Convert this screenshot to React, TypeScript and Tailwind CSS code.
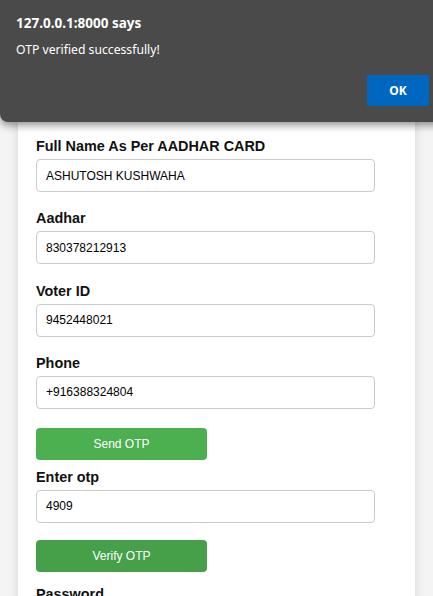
import React from "react";

function Field({ label, value, mb = "mb-[17.33px]" }: { label: string; value: string; mb?: string }) {
  return (
    <div>
      <label className="block text-[14.4px] font-bold leading-[18px] mb-[4px] text-[#111]">{label}</label>
      <div className={`h-[33px] w-[339px] border border-[#cccccc] rounded-[4px] bg-white px-[9px] flex items-center text-[12px] text-black ${mb}`}>
        {value}
      </div>
    </div>
  );
}

export default function App() {
  return (
    <div className="relative min-h-[596px] h-[596px] overflow-hidden bg-[#f4f4f4] font-['Liberation_Sans',Arial,sans-serif]">
      <div className="mx-[18px] bg-white shadow-[0_0_10px_rgba(0,0,0,0.12)] pt-[137px] px-[18px] pb-[40px]">
        <Field label="Full Name As Per AADHAR CARD" value="ASHUTOSH KUSHWAHA" />
        <Field label="Aadhar" value="830378212913" />
        <Field label="Voter ID" value="9452448021" />
        <Field label="Phone" value="+916388324804" mb="mb-[19px]" />
        <button className="block w-[171px] h-[32px] rounded-[4px] bg-[#4caf50] text-white text-[12px] mb-[8px]">Send OTP</button>
        <Field label="Enter otp" value="4909" mb="mb-[17px]" />
        <button className="block w-[171px] h-[32px] rounded-[4px] bg-[#45a049] text-white text-[12px] mb-[13px]">Verify OTP</button>
        <label className="block text-[14.4px] font-bold leading-[18px] text-[#111]">Password</label>
      </div>

      <div className="absolute top-0 left-0 w-[445px] h-[122px] bg-[#4a4a4a] rounded-bl-[8px] shadow-[0_3px_8px_rgba(0,0,0,0.45)] font-['Noto_Sans','Open_Sans',sans-serif] text-white">
        <div className="pl-[16px] pt-[13px] text-[13.5px] font-bold leading-[20px]">127.0.0.1:8000 says</div>
        <div className="pl-[16px] pt-[8px] text-[12.2px] leading-[18px]">OTP verified successfully!</div>
        <button className="absolute left-[367px] top-[75px] w-[62px] h-[31px] bg-[#0067c0] text-white text-[12px] font-bold">OK</button>
      </div>
    </div>
  );
}
